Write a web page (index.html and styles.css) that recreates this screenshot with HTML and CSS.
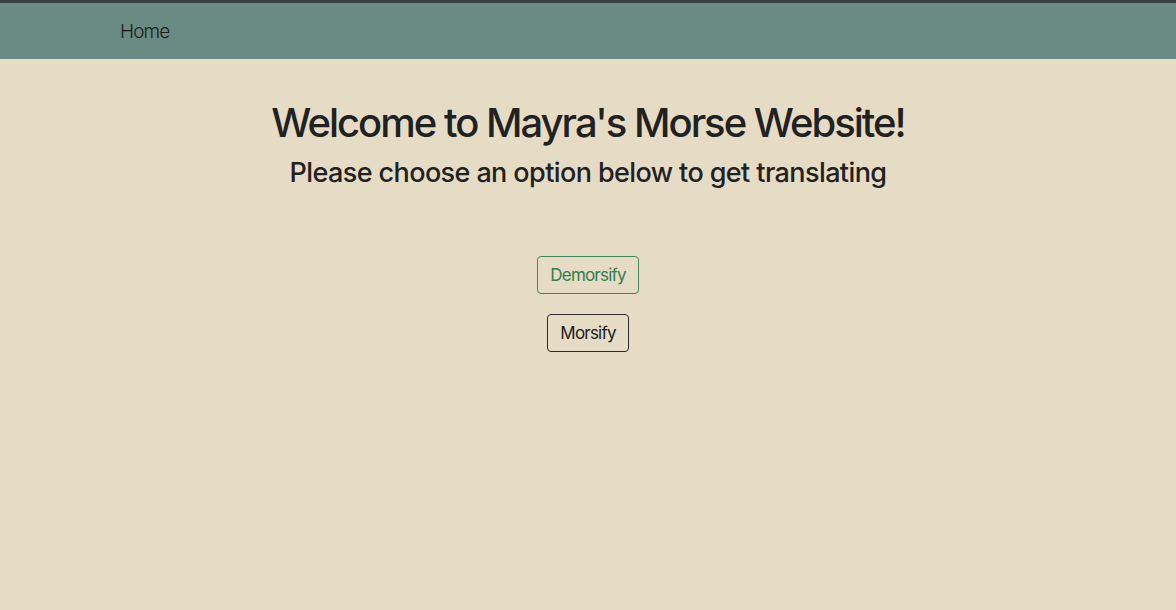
FILE: index.html
```html
<!DOCTYPE html>
<html>
<head>
<meta charset="utf-8">
<title>Mayra's Morse Website</title>
<link rel="stylesheet" href="styles.css">
</head>
<body>
<nav class="navbar">
  <a class="nav-link" href="#">Home</a>
</nav>
<main class="main">
  <h1 class="title">Welcome to Mayra's Morse Website!</h1>
  <h2 class="subtitle">Please choose an option below to get translating</h2>
  <div class="actions">
    <button class="btn btn-green">Demorsify</button>
    <button class="btn btn-dark">Morsify</button>
  </div>
</main>
</body>
</html>
```
FILE: styles.css
```css
html, body {
  margin: 0;
  padding: 0;
  height: 100%;
}
body {
  background: #e6dcc5;
  font-family: Inter, "Noto Sans", sans-serif;
  color: #212121;
  border-top: 3px solid #3b3f40;
  box-sizing: border-box;
}
.navbar {
  height: 56px;
  background: #6a8b83;
  display: flex;
  align-items: center;
  padding-left: 120px;
}
.nav-link {
  color: #1b1b1b;
  text-decoration: none;
  font-size: 19px;
  font-weight: 300;
  letter-spacing: -0.9px;
}
.main {
  display: flex;
  flex-direction: column;
  align-items: center;
  padding-top: 40px;
}
.title {
  margin: 0;
  font-size: 40px;
  font-weight: 500;
  line-height: 48px;
  letter-spacing: -2px;
}
.subtitle {
  margin: 6px 0 0;
  font-size: 27px;
  font-weight: 500;
  line-height: 40px;
  letter-spacing: -0.6px;
}
.actions {
  display: flex;
  flex-direction: column;
  align-items: center;
  gap: 20px;
  margin-top: 63px;
}
.btn {
  font-family: Inter, "Noto Sans", sans-serif;
  font-size: 17px;
  letter-spacing: -0.8px;
  background: transparent;
  height: 38px;
  padding: 0 12px;
  border-radius: 4px;
  cursor: pointer;
}
.btn-green {
  color: #2f7f4c;
  border: 1px solid #3f8a58;
}
.btn-dark {
  color: #1b1b1b;
  border: 1px solid #2a2a2a;
}
```
